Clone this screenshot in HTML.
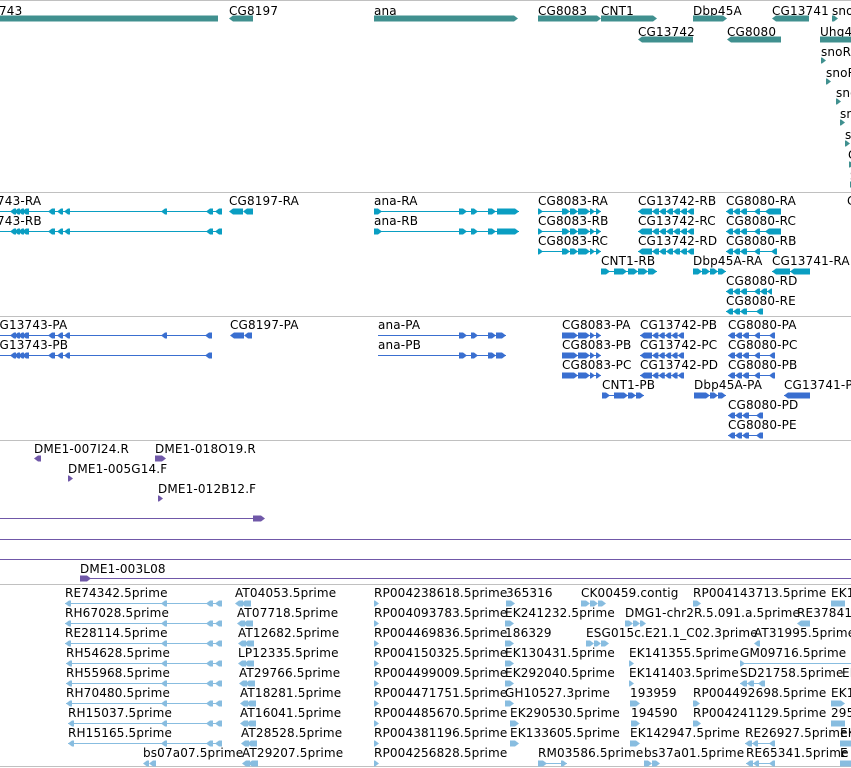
<!DOCTYPE html>
<html><head><meta charset="utf-8">
<style>
html,body{margin:0;padding:0;background:#fff;overflow:hidden;width:851px;height:768px}
svg text{font-family:"DejaVu Sans","Liberation Sans",sans-serif;font-size:12px;fill:#000;letter-spacing:0.15px}
</style></head>
<body>
<svg id="s" width="851" height="768" xmlns="http://www.w3.org/2000/svg">
<rect width="851" height="768" fill="#fff"/>
<text x="-1" y="15">743</text>
<text x="229" y="15">CG8197</text>
<text x="374" y="15">ana</text>
<text x="538" y="15">CG8083</text>
<text x="601" y="15">CNT1</text>
<text x="693" y="15">Dbp45A</text>
<text x="772" y="15">CG13741</text>
<text x="832" y="15">sno</text>
<text x="638" y="36">CG13742</text>
<text x="727" y="36">CG8080</text>
<text x="820" y="36">Uhg4</text>
<text x="821" y="56">snoRI</text>
<text x="826" y="77">snoR</text>
<text x="836" y="97">sno</text>
<text x="840" y="118">sn</text>
<text x="845" y="139">s</text>
<text x="848" y="159">C</text>
<text x="850" y="180">S</text>
<text x="-3" y="205">743-RA</text><text x="229" y="205">CG8197-RA</text><text x="374" y="205">ana-RA</text><text x="538" y="205">CG8083-RA</text><text x="638" y="205">CG13742-RB</text><text x="726" y="205">CG8080-RA</text><text x="847" y="205">C</text>
<text x="-3" y="225">743-RB</text><text x="374" y="225">ana-RB</text><text x="538" y="225">CG8083-RB</text><text x="638" y="225">CG13742-RC</text><text x="726" y="225">CG8080-RC</text>
<text x="538" y="245">CG8083-RC</text><text x="638" y="245">CG13742-RD</text><text x="726" y="245">CG8080-RB</text>
<text x="601" y="265">CNT1-RB</text><text x="693" y="265">Dbp45A-RA</text><text x="772" y="265">CG13741-RA</text>
<text x="726" y="285">CG8080-RD</text>
<text x="726" y="305">CG8080-RE</text>
<text x="-9" y="329">CG13743-PA</text><text x="230" y="329">CG8197-PA</text><text x="378" y="329">ana-PA</text><text x="562" y="329">CG8083-PA</text><text x="640" y="329">CG13742-PB</text><text x="728" y="329">CG8080-PA</text>
<text x="-9" y="349">CG13743-PB</text><text x="378" y="349">ana-PB</text><text x="562" y="349">CG8083-PB</text><text x="640" y="349">CG13742-PC</text><text x="728" y="349">CG8080-PC</text>
<text x="562" y="369">CG8083-PC</text><text x="640" y="369">CG13742-PD</text><text x="728" y="369">CG8080-PB</text>
<text x="602" y="389">CNT1-PB</text><text x="694" y="389">Dbp45A-PA</text><text x="784" y="389">CG13741-PA</text>
<text x="728" y="409">CG8080-PD</text>
<text x="728" y="429">CG8080-PE</text>
<text x="34" y="453">DME1-007I24.R</text><text x="155" y="453">DME1-018O19.R</text>
<text x="68" y="473">DME1-005G14.F</text>
<text x="158" y="493">DME1-012B12.F</text>
<text x="80" y="573">DME1-003L08</text>
<g id="est"></g>
</svg>
<script>
var s=document.getElementById('s'),h='';
function L(y,c){h+='<rect x="0" y="'+y+'" width="851" height="1" fill="'+(c||'#c0c0c0')+'"/>';}
function ln(a,b,y,c){h+='<rect x="'+a+'" y="'+y+'" width="'+(b-a)+'" height="1" fill="'+c+'"/>';}
function ex(a,b,y,c,d,hh){hh=hh||3;var p;
 if(d<0)p=[[a,y+.5],[a+4,y+.5-hh],[b,y+.5-hh],[b,y+.5+hh],[a+4,y+.5+hh]];
 else if(d>0)p=[[a,y+.5-hh],[b-4,y+.5-hh],[b,y+.5],[b-4,y+.5+hh],[a,y+.5+hh]];
 else p=[[a,y+.5-hh],[b,y+.5-hh],[b,y+.5+hh],[a,y+.5+hh]];
 h+='<polygon points="'+p.map(function(q){return q.join(',')}).join(' ')+'" fill="'+c+'"/>';}
function tr(a,b,y,c,xs,d){ln(a,b,y,c);xs.forEach(function(e){ex(e[0],e[1],y,c,d);});}
function ar(xs,n,w){var r=[];for(var i=0;i<n;i++)r.push([xs+i*w,xs+i*w+w]);return r;}
L(0);L(192);L(316);L(440);L(584);L(766);
var G='#40908f';
ex(0,218,18,G,0);ex(229,253,18,G,-1);ex(374,518,18,G,1);ex(538,601,18,G,1);ex(601,657,18,G,1);ex(693,727,18,G,1);ex(772,809,18,G,-1);ex(832,838,18,G,1);
ex(638,693,39,G,-1);ex(727,781,39,G,-1);ex(820,851,39,G,0);
[[821,60],[826,81],[836,101],[840,122],[845,143],[849,164],[850,184]].forEach(function(p){ex(p[0],p[0]+5,p[1],G,1);});
var T='#0a9ec2';
[211,231].forEach(function(y,i){tr(0,222,y,T,[[10,16],[14,20],[18,24],[22,29],[48,55],[57,63],[64,70]].concat(i?[[206,213],[215,222]]:[[161,167],[206,213],[215,222]]),-1);});
ex(229,243,211,T,-1);ex(243,253,211,T,-1);
[211,231].forEach(function(y){tr(374,519,y,T,[[374,382],[459,467],[471,478],[488,496],[497,519]],1);});
[211,231,251].forEach(function(y){tr(538,601,y,T,[[538,543],[562,570],[570,578],[578,590],[590,595],[596,601]],1);});
[211,231,251].forEach(function(y){tr(638,694,y,T,[[638,652]].concat(ar(652,6,7)),-1);});
[211,231].forEach(function(y){tr(726,781,y,T,[[726,733],[733,740],[740,747],[754,760],[765,781]],-1);});
tr(726,777,251,T,[[726,733],[733,740],[740,747],[754,760],[771,777]],-1);
tr(601,657,271,T,[[601,610],[614,627],[628,638],[638,648],[648,657]],1);
tr(693,726,271,T,[[693,702],[702,710],[710,718],[718,726]],1);
tr(772,810,271,T,[[772,790],[790,810]],-1);
tr(726,772,291,T,[[726,733],[733,740],[740,747],[754,760],[760,767],[767,772]],-1);
tr(726,763,311,T,[[726,733],[733,740],[740,747],[756,763]],-1);
var P='#3a6fd0';
[335,355].forEach(function(y,i){tr(0,212,y,P,[[10,16],[14,20],[18,24],[22,29],[48,55],[57,63],[64,70]].concat(i?[[205,212]]:[[161,167],[205,212]]),-1);});
ex(230,244,335,P,-1);ex(244,252,335,P,-1);
[335,355].forEach(function(y){tr(378,506,y,P,[[459,467],[471,478],[488,496],[496,506]],1);});
[335,355,375].forEach(function(y){tr(562,601,y,P,[[562,578],[578,590],[590,595],[596,601]],1);});
[335,355,375].forEach(function(y){tr(640,684,y,P,[[640,652]].concat(ar(652,5,6.4)),-1);});
[335,355].forEach(function(y){tr(728,775,y,P,[[728,735],[735,742],[742,749],[754,760],[769,775]],-1);});
tr(728,775,375,P,[[728,735],[735,742],[742,749],[754,760],[769,775]],-1);
tr(602,644,395,P,[[602,610],[614,628],[628,636],[636,644]],1);
tr(694,726,395,P,[[694,710],[710,718],[718,726]],1);
tr(784,810,395,P,[[784,810]],-1);
tr(728,763,415,P,[[728,735],[735,742],[742,749],[756,763]],-1);
tr(728,763,435,P,[[728,735],[735,742],[742,749],[756,763]],-1);
var D='#7058a8';
ex(34,41,458,D,-1);ex(155,166,458,D,1);ex(68,73,478,D,1);ex(158,163,498,D,1);
ln(0,258,518,D);ex(253,265,518,D,1);L(539,D);L(559,D);ln(80,851,578,D);ex(80,91,578,D,1);
var E='#88bde0',est=[
[[65,'RE74342.5prime'],[235,'AT04053.5prime'],[374,'RP004238618.5prime'],[506,'365316'],[581,'CK00459.contig'],[693,'RP004143713.5prime'],[831,'EK1']],
[[65,'RH67028.5prime'],[237,'AT07718.5prime'],[374,'RP004093783.5prime'],[505,'EK241232.5prime'],[625,'DMG1-chr2R.5.091.a.5prime'],[797,'RE37841']],
[[65,'RE28114.5prime'],[238,'AT12682.5prime'],[374,'RP004469836.5prime'],[505,'186329'],[586,'ESG015c.E21.1_C02.3prime'],[754,'AT31995.5prime']],
[[66,'RH54628.5prime'],[238,'LP12335.5prime'],[374,'RP004150325.5prime'],[505,'EK130431.5prime'],[629,'EK141355.5prime'],[740,'GM09716.5prime']],
[[66,'RH55968.5prime'],[239,'AT29766.5prime'],[374,'RP004499009.5prime'],[505,'EK292040.5prime'],[629,'EK141403.5prime'],[740,'SD21758.5prime'],[842,'EK']],
[[66,'RH70480.5prime'],[240,'AT18281.5prime'],[374,'RP004471751.5prime'],[505,'GH10527.3prime'],[630,'193959'],[693,'RP004492698.5prime'],[831,'EK1']],
[[68,'RH15037.5prime'],[240,'AT16041.5prime'],[374,'RP004485670.5prime'],[510,'EK290530.5prime'],[631,'194590'],[693,'RP004241129.5prime'],[831,'295']],
[[68,'RH15165.5prime'],[241,'AT28528.5prime'],[374,'RP004381196.5prime'],[510,'EK133605.5prime'],[630,'EK142947.5prime'],[745,'RE26927.5prime'],[840,'EK']],
[[143,'bs07a07.5prime'],[242,'AT29207.5prime'],[374,'RP004256828.5prime'],[538,'RM03586.5prime'],[644,'bs37a01.5prime'],[746,'RE65341.5prime'],[840,'E']]];
est.forEach(function(r,i){var b=597+20*i,y=603+20*i;
 r.forEach(function(c){h+='<text x="'+c[0]+'" y="'+b+'">'+c[1]+'</text>';});
 if(i<8){var a=r[0][0];tr(a,222,y,E,[[a,a+6],[161,167],[206,213],[215,222]],-1);}
 else ex(143,149,y,E,-1),ex(149,156,y,E,-1);
 ex(r[1][0],r[1][0]+8,y,E,-1);ex(r[1][0]+6,r[1][0]+16,y,E,-1);
 ex(374,379,y,E,1);
 ex(r[3][0],r[3][0]+9,y,E,1);
});
ex(581,590,603,E,1);ex(590,598,603,E,1);ex(598,606,603,E,1);ex(693,701,603,E,1);ex(831,845,603,E,0);
ex(625,633,623,E,1);ex(633,640,623,E,1);ex(640,646,623,E,1);ex(797,810,623,E,-1);
ex(586,594,643,E,1);ex(594,601,643,E,1);ex(601,609,643,E,1);ex(754,760,643,E,-1);
ex(629,634,663,E,1);ln(740,851,663,E);ex(740,745,663,E,1);
ex(629,634,683,E,1);tr(740,765,683,E,[[740,747],[747,754],[758,765]],-1);
ex(630,640,703,E,1);ex(693,700,703,E,1);ex(831,845,703,E,1);
ex(631,640,723,E,1);ex(693,701,723,E,1);ex(831,845,723,E,0);
ex(630,640,743,E,1);tr(745,775,743,E,[[745,752],[752,758],[769,775]],-1);ex(840,851,743,E,0);
tr(538,567,763,E,[[538,542],[561,567]],1);ex(644,652,763,E,1);ex(652,660,763,E,1);tr(746,775,763,E,[[746,753],[753,759],[769,775]],-1);ex(840,851,763,E,0);
document.getElementById('est').innerHTML=h;
</script>
</body></html>
